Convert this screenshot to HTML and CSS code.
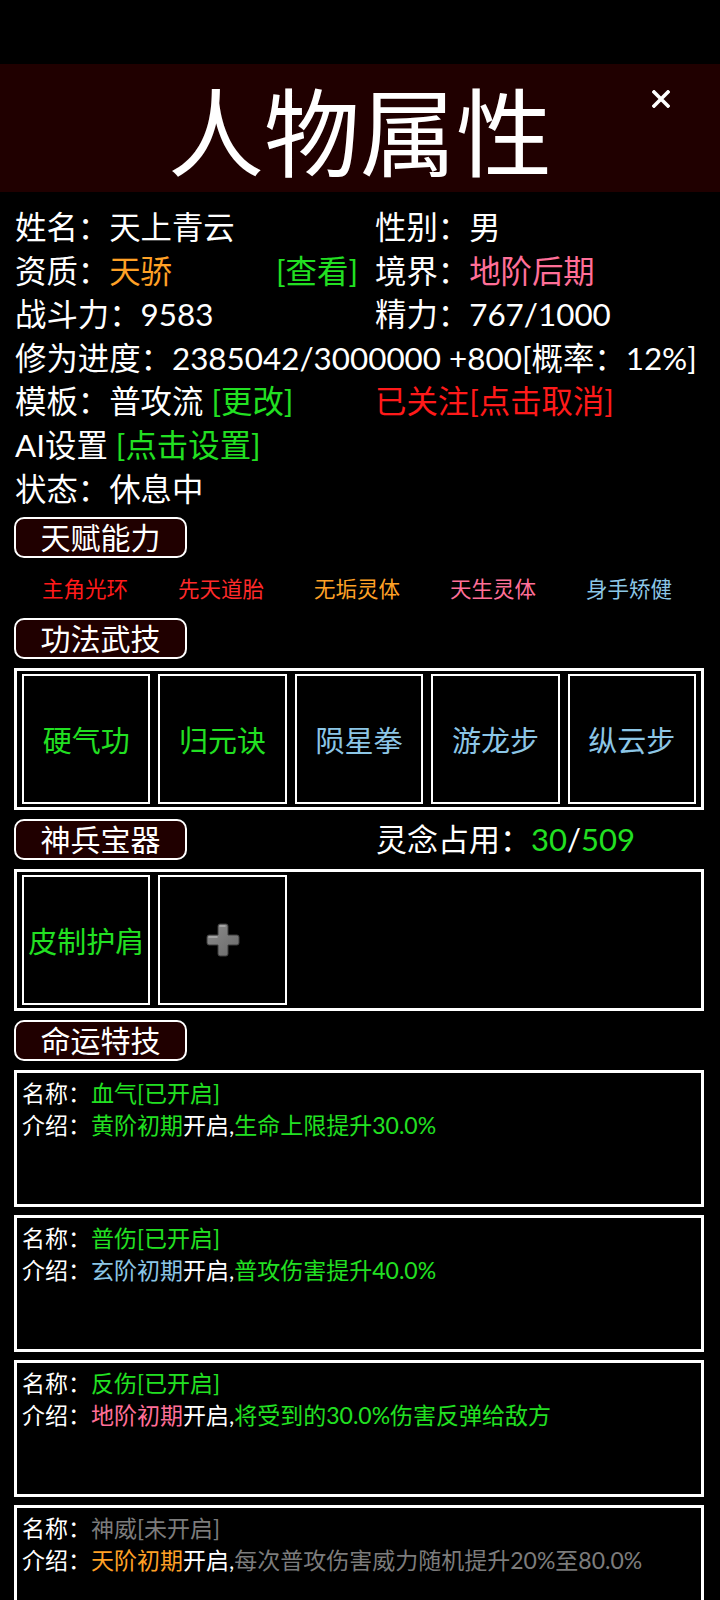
FILE: index.html
```html
<!DOCTYPE html>
<html lang="zh-CN">
<head>
    <meta charset="UTF-8">
    <meta name="viewport" content="width=device-width, initial-scale=1.0">
    <title>人物属性</title>
    <link rel="stylesheet" href="styles.css">
</head>
<body>
    <div class="top-gap"></div>
    <div class="header">
        <h1>人物属性</h1>
        <svg class="close" width="18" height="18" viewBox="0 0 18 18">
            <path d="M2 2 L16 16 M16 2 L2 16" stroke="#fff" stroke-width="3.6" stroke-linecap="square"/>
        </svg>
    </div>

    <div class="page">
        <div class="info">
            <div>姓名：天上青云</div>
            <div>性别：男</div>

            <div class="split">资质：<span class="orange">天骄</span><span class="push green">[查看]</span></div>
            <div>境界：<span class="pink">地阶后期</span></div>

            <div>战斗力：9583</div>
            <div>精力：767/1000</div>

            <div class="wide">修为进度：2385042/3000000 +800[概率：12%]</div>

            <div>模板：普攻流 <span class="green">[更改]</span></div>
            <div class="red">已关注[点击取消]</div>

            <div class="wide">AI设置 <span class="green">[点击设置]</span></div>
            <div class="wide">状态：休息中</div>
        </div>

        <div class="badge-row">
            <div class="badge">天赋能力</div>
        </div>
        <div class="talents">
            <span class="red">主角光环</span>
            <span class="red2">先天道胎</span>
            <span class="orange">无垢灵体</span>
            <span class="pink">天生灵体</span>
            <span class="blue">身手矫健</span>
        </div>

        <div class="badge-row">
            <div class="badge">功法武技</div>
        </div>
        <div class="slots">
            <div class="slot green">硬气功</div>
            <div class="slot green">归元诀</div>
            <div class="slot blue">陨星拳</div>
            <div class="slot blue">游龙步</div>
            <div class="slot blue">纵云步</div>
        </div>

        <div class="badge-row">
            <div class="badge">神兵宝器</div>
            <div class="spirit">灵念占用：<span class="green">30</span>/<span class="green">509</span></div>
        </div>
        <div class="slots">
            <div class="slot green">皮制护肩</div>
            <div class="slot">
                <svg width="34" height="34" viewBox="0 0 34 34">
                    <defs>
                        <linearGradient id="plusfill" x1="0" y1="0" x2="1" y2="1">
                            <stop offset="0" stop-color="#8c8c8c"/>
                            <stop offset="1" stop-color="#6a6a6a"/>
                        </linearGradient>
                    </defs>
                    <path d="M14 1 h6 a2 2 0 0 1 2 2 v9 h9 a2 2 0 0 1 2 2 v6 a2 2 0 0 1 -2 2 h-9 v9 a2 2 0 0 1 -2 2 h-6 a2 2 0 0 1 -2 -2 v-9 h-9 a2 2 0 0 1 -2 -2 v-6 a2 2 0 0 1 2 -2 h9 v-9 a2 2 0 0 1 2 -2 z" fill="url(#plusfill)" stroke="#3c3c3c" stroke-width="1"/>
                    <path d="M14 3 h5 M3 14 h8" stroke="#b0b0b0" stroke-width="1.5" stroke-linecap="round"/>
                </svg>
            </div>
        </div>

        <div class="badge-row">
            <div class="badge">命运特技</div>
        </div>
        <div class="card">
            <div>名称：<span class="green">血气[已开启]</span></div>
            <div>介绍：<span class="green">黄阶初期</span>开启,<span class="green">生命上限提升30.0%</span></div>
        </div>
        <div class="card">
            <div>名称：<span class="green">普伤[已开启]</span></div>
            <div>介绍：<span class="blue">玄阶初期</span>开启,<span class="green">普攻伤害提升40.0%</span></div>
        </div>
        <div class="card">
            <div>名称：<span class="green">反伤[已开启]</span></div>
            <div>介绍：<span class="pink">地阶初期</span>开启,<span class="green">将受到的30.0%伤害反弹给敌方</span></div>
        </div>
        <div class="card">
            <div>名称：<span class="gray">神威[未开启]</span></div>
            <div>介绍：<span class="orange">天阶初期</span>开启,<span class="gray">每次普攻伤害威力随机提升20%至80.0%</span></div>
        </div>
    </div>
</body>
</html>
```

FILE: styles.css
```css
body, html {
    margin: 0;
    padding: 0;
    background-color: #000;
    color: #fff;
    font-family: Lato, "Noto Sans CJK SC", sans-serif;
}

.top-gap {
    height: 64px;
}

.header {
    position: relative;
    height: 128px;
    background-color: #200000;
    display: flex;
    align-items: center;
    justify-content: center;
}

.header h1 {
    margin: 0;
    font-family: "Noto Sans CJK SC", sans-serif;
    font-size: 96px;
    font-weight: 400;
    line-height: 1;
}

.close {
    position: absolute;
    right: 50px;
    top: 26px;
}

.page {
    padding: 12px 16px 0 14px;
}

.info {
    display: grid;
    grid-template-columns: 343px 1fr;
    column-gap: 17px;
    font-size: 31.4px;
    line-height: 43.6px;
    padding: 2px 0 0 1px;
    margin-bottom: -2px;
}

.info .wide {
    grid-column: 1 / 3;
}

.info .split {
    display: flex;
}

.info .push {
    margin-left: auto;
}

.green { color: #22e022; }
.orange { color: #ffa126; }
.pink { color: #ff6f98; }
.red { color: #ff1a1a; }
.red2 { color: #ff2a2a; }
.blue { color: #8cc6e6; }
.gray { color: #7c7c7c; }

.badge-row {
    display: flex;
    align-items: center;
    height: 41px;
    margin-top: 8px;
}

.badge {
    width: 169px;
    height: 37px;
    border: 2px solid #fff;
    border-radius: 10px;
    background-color: #200000;
    font-size: 30px;
    line-height: 37px;
    text-align: center;
}

.spirit {
    margin-left: 189px;
    font-size: 31px;
    line-height: 41px;
}

.talents {
    display: grid;
    grid-template-columns: repeat(5, 1fr);
    padding: 6px 7px 0 3px;
    height: 46px;
    align-items: center;
    font-size: 21.5px;
    text-align: center;
}

.slots {
    display: grid;
    grid-template-columns: repeat(5, 1fr);
    gap: 8px;
    margin-top: 9px;
    padding: 3px 5px;
    border: 3px solid #fff;
}

.slot {
    height: 126px;
    border: 2px solid #fff;
    display: flex;
    align-items: center;
    justify-content: center;
    font-size: 29px;
    white-space: nowrap;
}

.slots + .badge-row {
    margin-top: 9px;
}

.card {
    height: 127px;
    margin-top: 8px;
    padding: 4px 5px 0;
    border: 3px solid #fff;
    font-size: 23px;
    line-height: 32px;
}

.badge-row + .card {
    margin-top: 9px;
}
```
